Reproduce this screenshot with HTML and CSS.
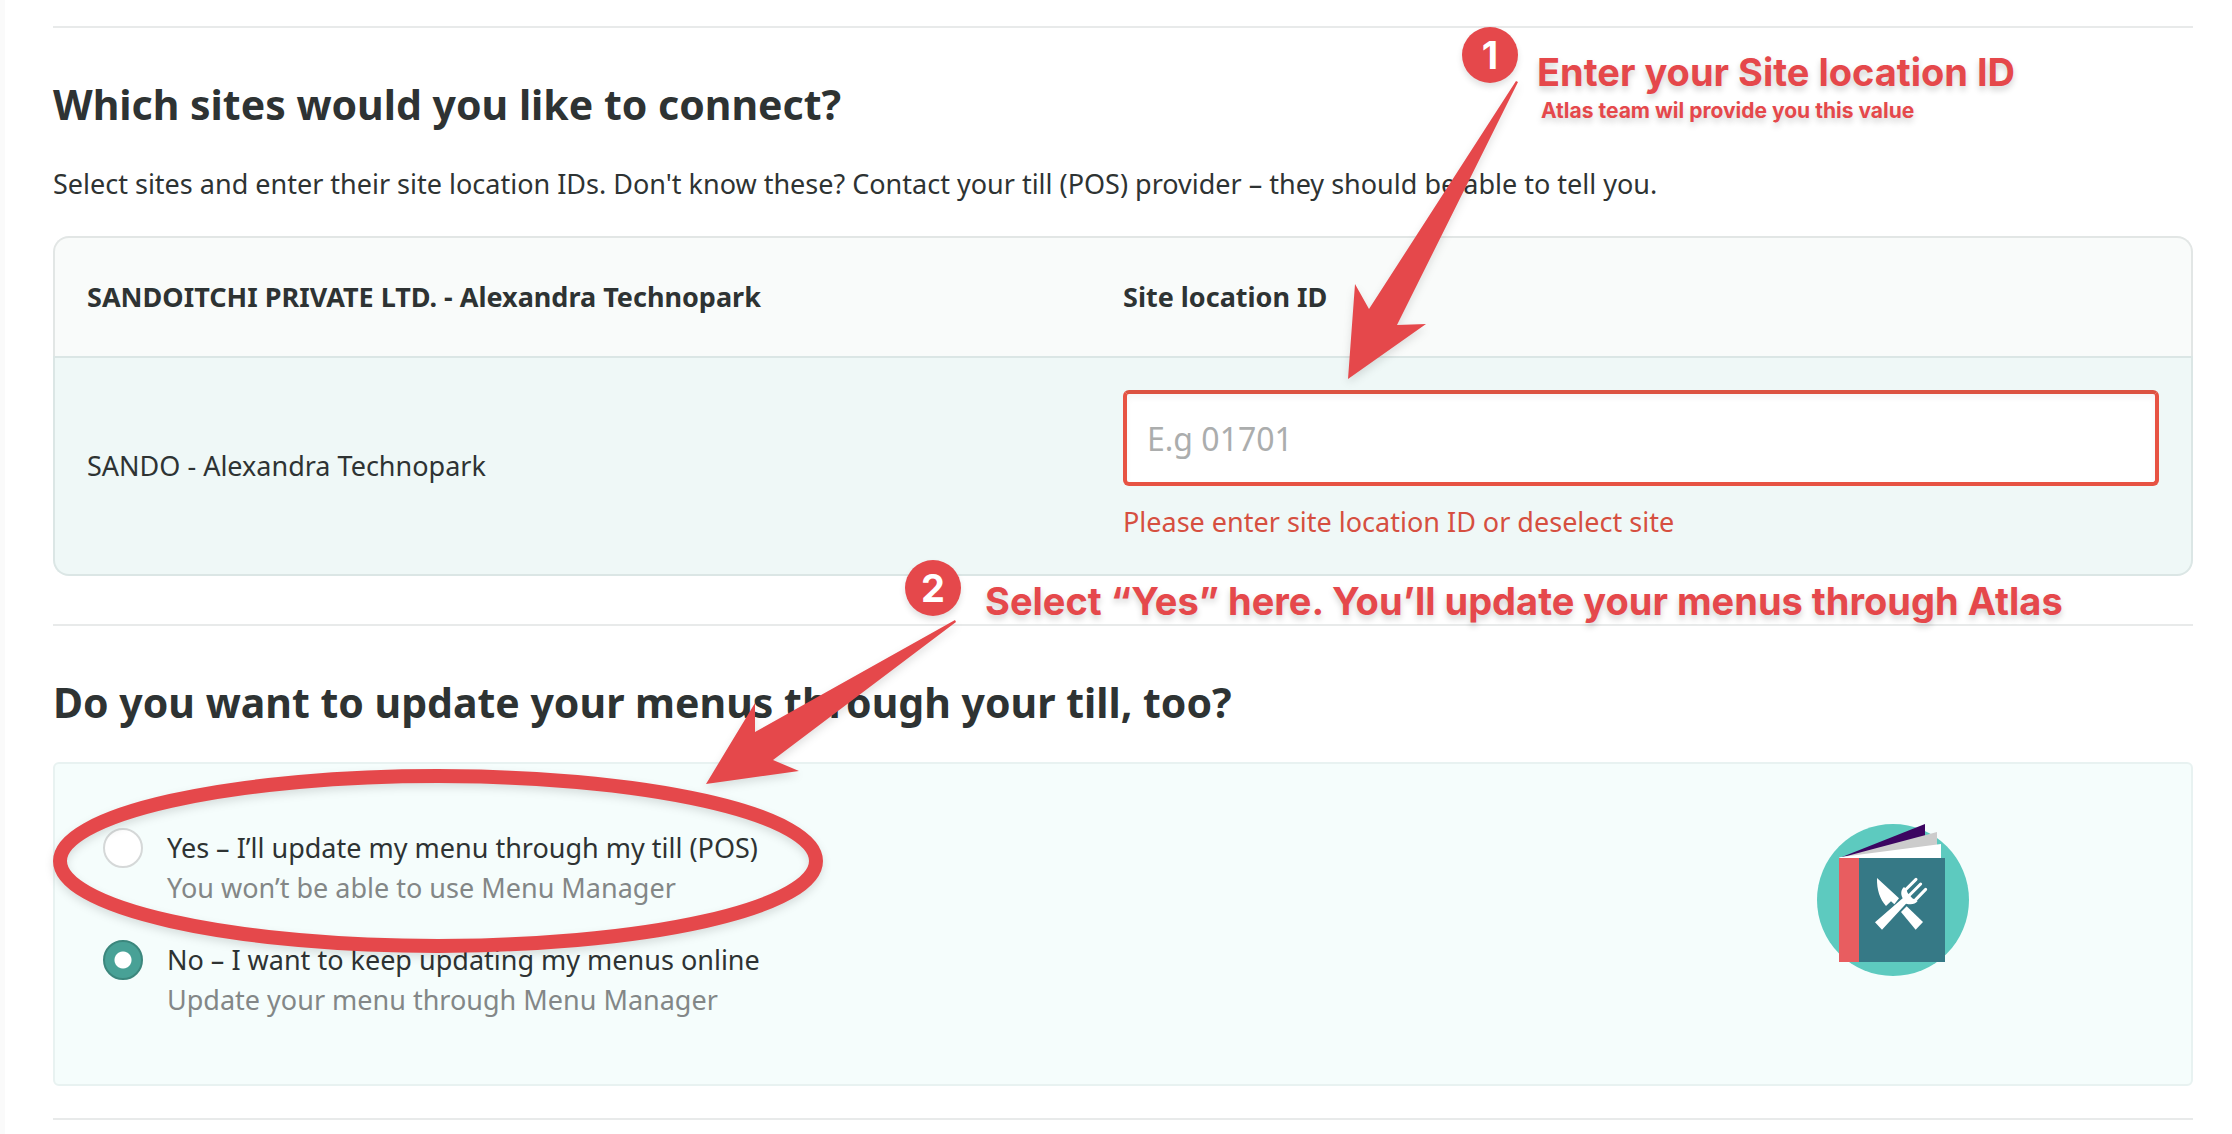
FILE: index.html
```html
<!DOCTYPE html>
<html lang="en">
<head>
<meta charset="utf-8">
<meta name="viewport" content="width=device-width, initial-scale=1">
<title>Connect sites</title>
<link rel="stylesheet" href="styles.css">
</head>
<body>
<main class="page">
  <section class="section">
    <h2 class="section-title">Which sites would you like to connect?</h2>
    <p class="section-intro">Select sites and enter their site location IDs. Don't know these? Contact your till (POS) provider – they should be able to tell you.</p>
    <table class="sites">
      <thead>
        <tr>
          <th scope="col">SANDOITCHI PRIVATE LTD. - Alexandra Technopark</th>
          <th scope="col">Site location ID</th>
        </tr>
      </thead>
      <tbody>
        <tr>
          <td><label for="location-id">SANDO - Alexandra Technopark</label></td>
          <td>
            <input class="location-input" id="location-id" type="text" placeholder="E.g 01701" aria-invalid="true" aria-describedby="location-error">
            <p class="error" id="location-error">Please enter site location ID or deselect site</p>
          </td>
        </tr>
      </tbody>
    </table>
  </section>

  <section class="section section-menus">
    <h2 class="section-title" id="menus-title">Do you want to update your menus through your till, too?</h2>
    <div class="panel">
      <div class="choices" role="radiogroup" aria-labelledby="menus-title">
        <label class="choice">
          <input class="choice-radio" type="radio" name="menu-updates" value="yes">
          <span class="choice-text">Yes – I’ll update my menu through my till (POS)<span class="choice-hint">You won’t be able to use Menu Manager</span></span>
        </label>
        <label class="choice">
          <input class="choice-radio" type="radio" name="menu-updates" value="no" checked>
          <span class="choice-text">No – I want to keep updating my menus online<span class="choice-hint">Update your menu through Menu Manager</span></span>
        </label>
      </div>
      <div class="illustration">
        <svg class="menu-book" viewBox="111 102 456 456" aria-hidden="true">
          <circle cx="339" cy="330" r="228" fill="#5dcabf"/>
          <path d="M178 204 435 102V204z" fill="#3c0561"/>
          <path d="M178 204 471 126V204z" fill="#ccc"/>
          <path d="M178 204V202L483 162V204z" fill="#fff"/>
          <path d="M177 204h60v312h-60z" fill="#e85d60"/>
          <path d="M237 204h258v312H237z" fill="#367986"/>
          <g fill="#fff">
            <path d="M291 264 357 325 343 343 333 334 318 348C300 328 290 300 291 264z"/>
            <path d="M363 366 380 349 429 396 407 419z"/>
            <path d="M285 397 368 325C361 311 363 299 372 291L379 298 383 309 397 325 413 333C405 343 394 345 378 341L306 419z"/>
            <path d="M408 268 373 303M422 282 386 318M437 298 402 334" fill="none" stroke="#fff" stroke-width="9" stroke-linecap="round"/>
          </g>
        </svg>
      </div>
    </div>
  </section>
  <hr class="end-rule">
</main>

<aside class="annotations">
  <svg class="annotation-shapes" aria-hidden="true">
    <path class="mark" d="M1516 81 1518 82 1397 325 1426 324 1348 379 1355 284 1369 309z"/>
    <path class="mark" d="M955 620 956 622 773 760 799 771 706 784 755 703 755 732z"/>
    <ellipse class="mark-ring" cx="438" cy="861" rx="378" ry="85"/>
  </svg>
  <span class="badge badge-one">1</span>
  <div class="note note-one">Enter your Site location ID<small class="note-detail">Atlas team wil provide you this value</small></div>
  <span class="badge badge-two">2</span>
  <div class="note note-two">Select “Yes” here. You’ll update your menus through Atlas</div>
</aside>
</body>
</html>
```
FILE: styles.css
```css
* {
  box-sizing: border-box;
}

body {
  margin: 0;
  position: relative;
  background: #fff;
  color: #2e3333;
  font: 27px/40px "Noto Sans", sans-serif;
}

.page {
  padding: 26px 39px 14px 48px;
  border-left: 5px solid #fafafa;
}

.section {
  padding: 48px 0;
  border-top: 2px solid #e8eaea;
}

.section-menus {
  padding-bottom: 32px;
}

.section-title {
  margin: 0 0 32px;
  font-size: 41px;
  line-height: 56px;
  font-weight: 700;
}

.section-intro {
  margin: 0 0 32px;
}

.sites {
  width: 100%;
  table-layout: fixed;
  border-collapse: separate;
  border-spacing: 0;
  text-align: left;
}

.sites th,
.sites td {
  border: 0 solid #dbe6e5;
}

.sites th {
  padding: 39px 0;
  background: #f9fbfa;
  border-color: #e2e6e5;
  border-top-width: 2px;
  font-weight: 700;
}

.sites td {
  padding: 32px 0;
  background: #eff8f7;
  border-width: 2px 0;
}

.sites th:first-child,
.sites td:first-child {
  padding-left: 32px;
  border-left-width: 2px;
}

.sites th:last-child,
.sites td:last-child {
  padding-right: 32px;
  border-right-width: 2px;
}

.sites th:first-child {
  border-top-left-radius: 16px;
}

.sites th:last-child {
  border-top-right-radius: 16px;
}

.sites td:first-child {
  border-bottom-left-radius: 16px;
}

.sites td:last-child {
  border-bottom-right-radius: 16px;
}

.location-input {
  display: block;
  width: 100%;
  height: 96px;
  padding: 0 20px;
  border: 4px solid #e75343;
  border-top-color: #dc5241;
  border-radius: 6px;
  background: #fff;
  box-shadow: inset 0 4px 6px rgba(0, 0, 0, 0.04);
  color: inherit;
  font: 32px/40px "Noto Sans", sans-serif;
}

.location-input::placeholder {
  color: #abadad;
  opacity: 1;
}

.error {
  margin: 16px 0 0;
  color: #d64f40;
}

.panel {
  display: flex;
  padding: 60px 48px 64px;
  border: 2px solid #e8f2f1;
  border-radius: 6px;
  background: #f5fdfc;
}

.choices {
  flex: 1;
  display: flex;
  flex-direction: column;
  align-items: flex-start;
  gap: 32px;
  padding-top: 4px;
}

.choice {
  display: flex;
  gap: 24px;
}

.choice-radio {
  appearance: none;
  flex: none;
  width: 40px;
  height: 40px;
  margin: 0;
  border: 2px solid #d5d8d8;
  border-radius: 50%;
  background: #fff;
}

.choice-radio:checked {
  border-color: #3c877d;
  background: radial-gradient(circle, #fff 8px, #48a196 9px);
}

.choice-hint {
  display: block;
  color: #838787;
}

.illustration {
  width: 500px;
  display: flex;
  justify-content: center;
  align-items: flex-start;
}

.menu-book {
  width: 152px;
  height: 152px;
}

.end-rule {
  margin: 0;
  border: 0;
  border-top: 2px solid #e8eaea;
}

/* Guidance drawn over the form */
.annotations {
  position: absolute;
  inset: 0;
  pointer-events: none;
  color: #e5484b;
  font: 700 38px/50px Inter, sans-serif;
}

.annotation-shapes {
  position: absolute;
  width: 100%;
  height: 100%;
  filter: drop-shadow(0 4px 4px rgba(0, 0, 0, 0.12));
}

.mark {
  fill: #e5484b;
}

.mark-ring {
  fill: none;
  stroke: #e5484b;
  stroke-width: 14px;
}

.badge {
  position: absolute;
  width: 56px;
  height: 56px;
  border-radius: 50%;
  background: #e5484b;
  box-shadow: 0 4px 6px rgba(0, 0, 0, 0.12);
  color: #fff;
  line-height: 56px;
  text-align: center;
}

.badge-one {
  left: 1462px;
  top: 27px;
}

.badge-two {
  left: 905px;
  top: 560px;
}

.note {
  position: absolute;
  white-space: nowrap;
  text-shadow: 0 4px 6px rgba(0, 0, 0, 0.18);
}

.note-one {
  left: 1537px;
  top: 47px;
}

.note-two {
  left: 985px;
  top: 576px;
}

.note-detail {
  display: block;
  padding-left: 4px;
  font-size: 21px;
  line-height: 28px;
}
```
